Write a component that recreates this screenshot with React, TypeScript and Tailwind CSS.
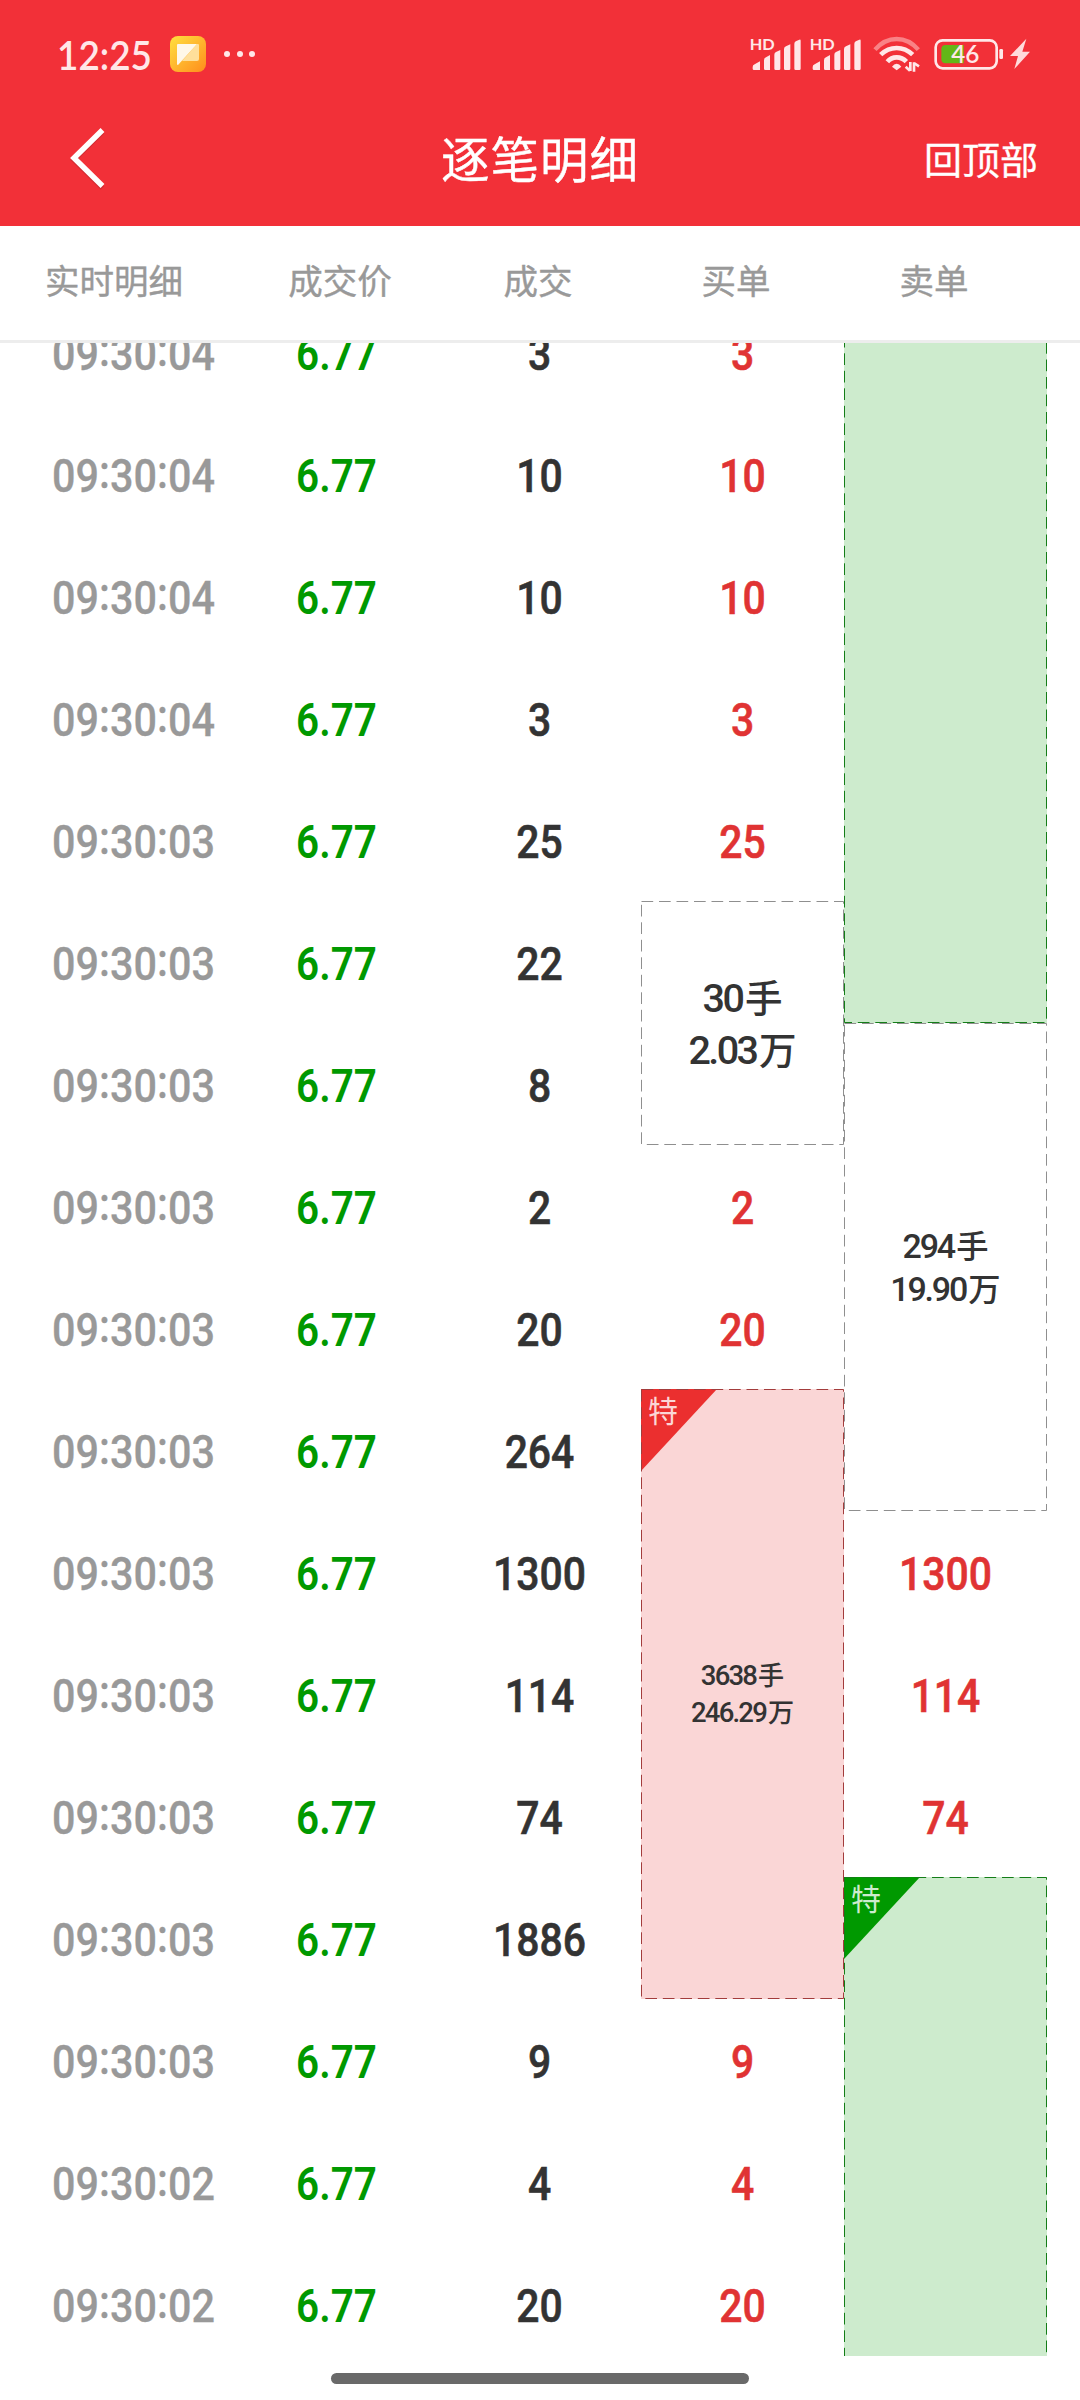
import clsx from "clsx";

type Tone = "red" | "green" | "plain";

interface Trade {
  time: string;
  price: string;
  volume: string;
}

interface OrderBlock {
  rows: number;
  tone?: Tone;
  value?: string;
  lines?: [string, string][];
  size?: "sm" | "md" | "lg";
  tag?: boolean;
  dashOffset?: number;
}

const ROW_HEIGHT = 122;

const TRADES: Trade[] = [
  { time: "09:30:04", price: "6.77", volume: "3" },
  { time: "09:30:04", price: "6.77", volume: "10" },
  { time: "09:30:04", price: "6.77", volume: "10" },
  { time: "09:30:04", price: "6.77", volume: "3" },
  { time: "09:30:03", price: "6.77", volume: "25" },
  { time: "09:30:03", price: "6.77", volume: "22" },
  { time: "09:30:03", price: "6.77", volume: "8" },
  { time: "09:30:03", price: "6.77", volume: "2" },
  { time: "09:30:03", price: "6.77", volume: "20" },
  { time: "09:30:03", price: "6.77", volume: "264" },
  { time: "09:30:03", price: "6.77", volume: "1300" },
  { time: "09:30:03", price: "6.77", volume: "114" },
  { time: "09:30:03", price: "6.77", volume: "74" },
  { time: "09:30:03", price: "6.77", volume: "1886" },
  { time: "09:30:03", price: "6.77", volume: "9" },
  { time: "09:30:02", price: "6.77", volume: "4" },
  { time: "09:30:02", price: "6.77", volume: "20" },
];

const BUY_ORDERS: OrderBlock[] = [
  { rows: 1, value: "3" },
  { rows: 1, value: "10" },
  { rows: 1, value: "10" },
  { rows: 1, value: "3" },
  { rows: 1, value: "25" },
  { rows: 2, tone: "plain", size: "lg", lines: [["30", "手"], ["2.03", "万"]] },
  { rows: 1, value: "2" },
  { rows: 1, value: "20" },
  { rows: 5, tone: "red", size: "sm", tag: true, lines: [["3638", "手"], ["246.29", "万"]] },
  { rows: 1, value: "9" },
  { rows: 1, value: "4" },
  { rows: 1, value: "20" },
];

const SELL_ORDERS: OrderBlock[] = [
  { rows: 6, tone: "green", dashOffset: 10 },
  { rows: 4, tone: "plain", size: "md", lines: [["294", "手"], ["19.90", "万"]] },
  { rows: 1, value: "1300" },
  { rows: 1, value: "114" },
  { rows: 1, value: "74" },
  { rows: 25, tone: "green", tag: true },
];

const HEADERS = ["成交价", "成交", "买单", "卖单"];

const BLOCK_FILL: Record<Tone, string> = {
  red: "bg-[#fad6d6]",
  green: "bg-[#cdebcd]",
  plain: "",
};

const BLOCK_STROKE: Record<Tone, string> = {
  red: "#a33c3c",
  green: "#147d18",
  plain: "#8f8f8f",
};

const LABEL_SIZE = {
  sm: "text-[27.5px] leading-[36.6px]",
  md: "text-[34px] leading-[43px]",
  lg: "text-[39.5px] leading-[52px]",
};

function SignalIcon() {
  return (
    <svg width="51" height="36" viewBox="58 48 153 108" fill="#ffe7e8" className="overflow-visible">
      <text
        x="57"
        y="90"
        fontSize="48"
        fontWeight="700"
        fontFamily="Lato, sans-serif"
        textLength="75"
        lengthAdjust="spacingAndGlyphs"
      >
        HD
      </text>
      <path d="M66 141q0-6 6-8l16-9v26H70q-4 0-4-4z" />
      <path d="M100 121q0-7 6-9l12-7v45h-14q-4 0-4-4z" />
      <path d="M131 104q0-6 5-8l13-6v56q0 4-4 4h-10q-4 0-4-4z" />
      <path d="M160 87q0-6 6-8l13-6v73q0 4-4 4h-11q-4 0-4-4z" />
      <path d="M191 71q0-6 6-8l9-4q4-2 4 3v84q0 4-4 4h-11q-4 0-4-4z" />
    </svg>
  );
}

function WifiIcon() {
  return (
    <svg width="47" height="36" viewBox="427 50 141 108" fill="none" stroke="#ffe7e8">
      <path d="M433 91Q461 59 498 59T563 91" strokeWidth="13" stroke="#f98286" />
      <path d="M450 106Q471 86 498 86T546 106" strokeWidth="14" />
      <path d="M470 127Q481 114 498 114T527 127" strokeWidth="14" />
      <path d="M484 142Q490 133 498 133T512 142L498 153Z" fill="#ffe7e8" stroke="none" />
      <path d="M539 128V155M538 154L525 142M550 157V129M550 131L565 141" strokeWidth="8" />
    </svg>
  );
}

function BatteryIcon() {
  return (
    <svg width="70" height="32" viewBox="611 54 210 96">
      <rect x="616" y="61" width="183" height="84" rx="21" fill="none" stroke="#ffe7e8" strokeWidth="8" />
      <path d="M646 75H700V130H646Q633 130 633 117V88Q633 75 646 75Z" fill="#63b717" />
      <text x="663" y="129" fontSize="73" fontWeight="600" fontFamily="Lato, sans-serif" fill="#ffe7e8" textLength="84">
        46
      </text>
      <rect x="807" y="87" width="11" height="30" rx="4" fill="#ffe7e8" />
    </svg>
  );
}

function StatusBar() {
  return (
    <div className="flex h-[108px] items-center justify-between pr-[50px] pl-[57px]">
      <div className="flex items-center">
        <span className="w-[96px] origin-left scale-x-[.9] font-[Lato] text-[41px] leading-none font-semibold text-[#ffe7e8]">
          12:25
        </span>
        <svg width="36" height="36" viewBox="0 0 36 36" className="ml-[17px]">
          <defs>
            <linearGradient id="note" x1="0" y1="0" x2="1" y2="1">
              <stop offset="0" stopColor="#ffe03f" />
              <stop offset="1" stopColor="#ff8d1c" />
            </linearGradient>
          </defs>
          <rect width="36" height="36" rx="8" fill="url(#note)" />
          <path d="M27 8h1q1 0 1 1v14q0 2-2 2H12z" fill="#ffdf9a" />
          <path d="M8 8h19L8 29q-1 0-1-1V9q0-1 1-1z" fill="#fff8e8" />
        </svg>
        <div className="ml-[18px] flex gap-[6.5px]">
          <i className="size-[6px] rounded-full bg-[#ffe7e8]" />
          <i className="size-[6px] rounded-full bg-[#ffe7e8]" />
          <i className="size-[6px] rounded-full bg-[#ffe7e8]" />
        </div>
      </div>
      <div className="flex items-center">
        <SignalIcon />
        <div className="ml-[9px]">
          <SignalIcon />
        </div>
        <div className="ml-[12px]">
          <WifiIcon />
        </div>
        <div className="ml-[14px]">
          <BatteryIcon />
        </div>
        <svg width="20" height="32" viewBox="838 56 60 96" className="ml-[6px]" fill="#ffdadb">
          <path d="M887 58L838 110H862L851 149L898 97H875Z" />
        </svg>
      </div>
    </div>
  );
}

function NavBar() {
  return (
    <div className="grid h-[118px] grid-cols-3 items-center px-[42px] pb-[19px] text-white">
      <svg width="42" height="64" viewBox="0 0 42 64" className="ml-[24px]" fill="none">
        <path d="M36.500 6L8 34L36.500 62" stroke="#b5282d" strokeOpacity=".5" strokeWidth="5" />
        <path d="M36.500 4L8 32L36.500 60" stroke="#fff" strokeWidth="5.500" />
      </svg>
      <h1 className="text-center text-[48.500px] leading-none tracking-[1px] whitespace-nowrap [-webkit-text-stroke:0.4px]">
        逐笔明细
      </h1>
      <button className="text-right text-[38px] leading-none [-webkit-text-stroke:0.3px]">回顶部</button>
    </div>
  );
}

function ColumnHeader() {
  return (
    <div className="flex h-[117px] shrink-0 items-center border-b-[3px] border-[#ededed] pb-[6px] text-[34.500px] text-[#999] [-webkit-text-stroke:0.4px]">
      <span className="w-[241px] pl-[45px]">实时明细</span>
      {HEADERS.map((label) => (
        <span key={label} className="w-[198px] text-center">
          {label}
        </span>
      ))}
    </div>
  );
}

function Cell({ children, className }: { children: React.ReactNode; className: string }) {
  return (
    <div
      className={clsx(
        "flex h-[122px] shrink-0 items-center justify-center pt-[3px] font-[Roboto] text-[47px] leading-none",
        className
      )}
    >
      {children}
    </div>
  );
}

// Colons sit at the middle of the digits
function Time({ value }: { value: string }) {
  const [h, m, s] = value.split(":");
  return (
    <span>
      {h}
      <span className="relative -top-[4px]">:</span>
      {m}
      <span className="relative -top-[4px]">:</span>
      {s}
    </span>
  );
}

function Tag({ tone }: { tone: Tone }) {
  return (
    <div className="absolute top-0 left-0 h-[82px] w-[76px]">
      <svg width="76" height="82" className="absolute">
        <path d="M0 0H76L0 82Z" fill={tone === "red" ? "#eb2f2f" : "#009900"} />
      </svg>
      <span
        className={clsx(
          "absolute top-[5px] left-[7px] text-[30px] leading-[30px]",
          tone === "red" ? "text-[#fbd6d6]" : "text-[#cdebcd]"
        )}
      >
        特
      </span>
    </div>
  );
}

function Block({ block }: { block: OrderBlock }) {
  const { rows, tone = "plain", lines, size = "md", tag, dashOffset = 0 } = block;
  const height = rows * ROW_HEIGHT;

  return (
    <div
      className={clsx("relative flex shrink-0 flex-col items-center justify-center pb-[4px]", BLOCK_FILL[tone])}
      style={{ height }}
    >
      {tag && <Tag tone={tone} />}
      <svg width="203" height={height} className="absolute inset-0">
        <rect
          x=".5"
          y=".5"
          width="202"
          height={height - 1}
          fill="none"
          stroke={BLOCK_STROKE[tone]}
          strokeDasharray="11.7 5.8"
          strokeDashoffset={dashOffset}
        />
      </svg>
      {lines?.map(([amount, unit]) => (
        <div key={unit} className={clsx("font-medium text-[#333]", LABEL_SIZE[size])}>
          <span className="font-[Roboto] leading-none tracking-[-.065em]">{amount}</span>
          <span className="ml-[.07em] text-[.95em] leading-none">{unit}</span>
        </div>
      ))}
    </div>
  );
}

function OrderColumn({ orders }: { orders: OrderBlock[] }) {
  return (
    <div className="flex w-[203px] flex-col">
      {orders.map((order, i) =>
        order.value ? (
          <Cell key={i} className="scale-x-[.87] font-medium text-[#e03333] [-webkit-text-stroke:0.6px]">
            {order.value}
          </Cell>
        ) : (
          <Block key={i} block={order} />
        )
      )}
    </div>
  );
}

export default function App() {
  return (
    <div className="flex h-[2400px] w-[1080px] flex-col overflow-hidden bg-white font-['Noto_Sans_CJK_SC',sans-serif]">
      <header className="h-[226px] shrink-0 bg-[#f23038]">
        <StatusBar />
        <NavBar />
      </header>
      <ColumnHeader />
      <main className="h-[2013px] shrink-0 overflow-hidden">
        <div className="-mt-[52px] flex pl-[32px]">
          <div className="w-[203px]">
            {TRADES.map((t, i) => (
              <Cell key={i} className="scale-x-[.88] font-medium text-[#999] [-webkit-text-stroke:0.3px]">
                <Time value={t.time} />
              </Cell>
            ))}
          </div>
          <div className="w-[203px]">
            {TRADES.map((t, i) => (
              <Cell key={i} className="scale-x-[.86] font-semibold text-[#009900]">
                {t.price}
              </Cell>
            ))}
          </div>
          <div className="w-[203px]">
            {TRADES.map((t, i) => (
              <Cell key={i} className="scale-x-[.87] font-medium text-[#333] [-webkit-text-stroke:0.6px]">
                {t.volume}
              </Cell>
            ))}
          </div>
          <OrderColumn orders={BUY_ORDERS} />
          <OrderColumn orders={SELL_ORDERS} />
        </div>
      </main>
      <footer className="flex flex-1 justify-center pt-[17px]">
        <div className="h-[11px] w-[418px] rounded-full bg-[#696969]" />
      </footer>
    </div>
  );
}
